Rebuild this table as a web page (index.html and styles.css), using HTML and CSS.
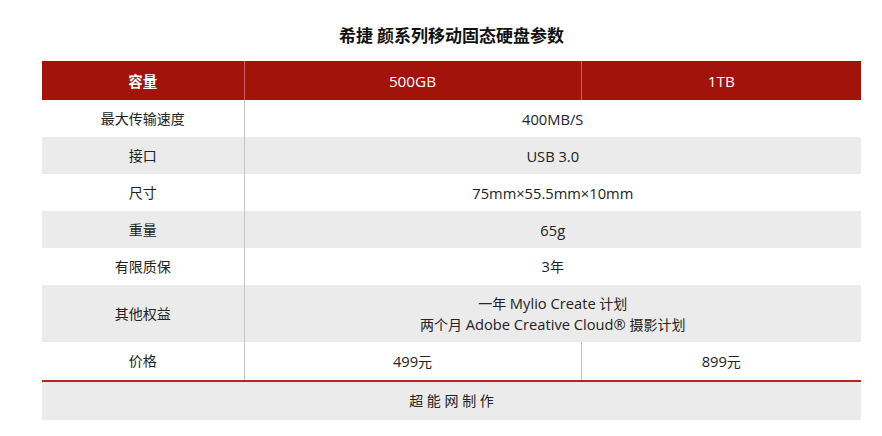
FILE: index.html
```html
<!DOCTYPE html>
<html lang="zh">
<head>
<meta charset="utf-8">
<link rel="stylesheet" href="styles.css">
</head>
<body>
<div class="page">
  <h1 class="title">希捷 颜系列移动固态硬盘参数</h1>
  <table class="spec">
    <colgroup><col class="c1"><col class="c2"><col class="c3"></colgroup>
    <thead>
      <tr><th>容量</th><th class="en">500GB</th><th class="en">1TB</th></tr>
    </thead>
    <tbody>
      <tr><td>最大传输速度</td><td colspan="2" class="en">400MB/S</td></tr>
      <tr class="alt"><td>接口</td><td colspan="2" class="en">USB 3.0</td></tr>
      <tr><td>尺寸</td><td colspan="2" class="en">75mm×55.5mm×10mm</td></tr>
      <tr class="alt"><td>重量</td><td colspan="2" class="en">65g</td></tr>
      <tr><td>有限质保</td><td colspan="2"><span class="en">3</span>年</td></tr>
      <tr class="alt tall"><td>其他权益</td><td colspan="2">一年 <span class="en">Mylio Create</span> 计划<br>两个月 <span class="en">Adobe Creative Cloud®</span> 摄影计划</td></tr>
      <tr class="last"><td>价格</td><td><span class="en">499</span>元</td><td><span class="en">899</span>元</td></tr>
    </tbody>
    <tfoot>
      <tr><td colspan="3">超 能 网 制 作</td></tr>
    </tfoot>
  </table>
</div>
</body>
</html>
```
FILE: styles.css
```css
html, body {
  margin: 0;
  padding: 0;
  background: #ffffff;
}
body {
  font-family: "Open Sans", "Noto Sans CJK SC", sans-serif;
  color: #222;
}
.page {
  width: 819px;
  margin-left: 42px;
  padding-top: 24px;
}
.title {
  margin: 0 0 15px 0;
  height: 22px;
  line-height: 22px;
  font-size: 17px;
  font-weight: bold;
  text-align: center;
  color: #111;
  font-family: "Noto Sans CJK SC", sans-serif;
}
.spec {
  width: 819px;
  border-collapse: collapse;
  table-layout: fixed;
  font-size: 14px;
}
.c1 { width: 202px; }
.c2 { width: 337px; }
.c3 { width: 280px; }
.spec th {
  background: #a1130b;
  color: #fff;
  font-weight: normal;
  height: 39px;
  padding: 0;
  border-left: 1px solid #c9625c;
}
.spec th:first-child {
  border-left: none;
  font-family: "Noto Sans CJK SC", sans-serif;
  font-weight: bold;
  font-size: 14.5px;
}
.spec th.en { font-size: 15.3px; }
.en { font-size: 14.7px; }
.spec td {
  height: 37px;
  padding: 0;
  text-align: center;
  border-left: 1px solid #c4c4c4;
  line-height: 20px;
}
.spec td:first-child { border-left: none; }
.spec tr.alt td { background: #ebebeb; }
.spec tr.tall td { height: 57px; }
.spec tr.last td { height: 38px; border-bottom: 2px solid #c2201b; }
.spec tfoot td {
  background: #ebebeb;
  height: 38px;
  border-left: none;
}
```
